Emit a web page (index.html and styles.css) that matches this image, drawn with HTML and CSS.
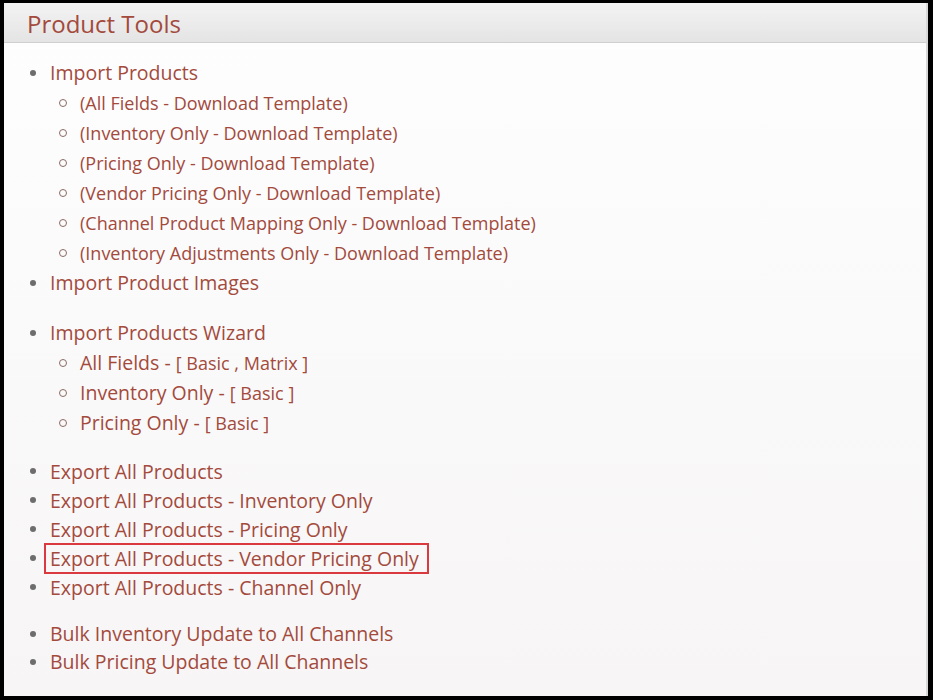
FILE: index.html
```html
<!DOCTYPE html>
<html lang="en">
<head>
<meta charset="utf-8">
<title>Product Tools</title>
<link rel="stylesheet" href="styles.css">
</head>
<body>
<div class="frame">
  <div class="panel">
    <div class="panel-header">Product Tools</div>
    <div class="panel-body">
      <ul class="list g1">
        <li class="item"><a>Import Products</a>
          <ul class="sub">
            <li class="sub-item"><a>(All Fields - Download Template)</a></li>
            <li class="sub-item"><a>(Inventory Only - Download Template)</a></li>
            <li class="sub-item"><a>(Pricing Only - Download Template)</a></li>
            <li class="sub-item"><a>(Vendor Pricing Only - Download Template)</a></li>
            <li class="sub-item"><a>(Channel Product Mapping Only - Download Template)</a></li>
            <li class="sub-item"><a>(Inventory Adjustments Only - Download Template)</a></li>
          </ul>
        </li>
        <li class="item"><a>Import Product Images</a></li>
      </ul>
      <ul class="list g2">
        <li class="item"><a>Import Products Wizard</a>
          <ul class="sub">
            <li class="sub-item big"><a>All Fields - </a><span class="br">[ <a>Basic</a> , <a>Matrix</a> ]</span></li>
            <li class="sub-item big"><a>Inventory Only - </a><span class="br">[ <a>Basic</a> ]</span></li>
            <li class="sub-item big"><a>Pricing Only - </a><span class="br">[ <a>Basic</a> ]</span></li>
          </ul>
        </li>
      </ul>
      <ul class="list g3">
        <li class="item"><a>Export All Products</a></li>
        <li class="item"><a>Export All Products - Inventory Only</a></li>
        <li class="item"><a>Export All Products - Pricing Only</a></li>
        <li class="item"><a class="highlight">Export All Products - Vendor Pricing Only</a></li>
        <li class="item"><a>Export All Products - Channel Only</a></li>
      </ul>
      <ul class="list g4">
        <li class="item"><a>Bulk Inventory Update to All Channels</a></li>
        <li class="item"><a>Bulk Pricing Update to All Channels</a></li>
      </ul>
    </div>
  </div>
</div>
</body>
</html>
```

FILE: styles.css
```css
html, body {
  margin: 0;
  padding: 0;
  background: #000;
}
body {
  font-family: "Open Sans", "Liberation Sans", sans-serif;
  color: #a34a3c;
}
.frame {
  box-sizing: border-box;
  width: 933px;
  height: 700px;
  border-style: solid;
  border-color: #000;
  border-width: 3px 5px 4px 4px;
  background: #000;
}
.panel {
  box-sizing: border-box;
  height: 100%;
  background: linear-gradient(#fefefe, #f7f5f5);
  border-right: 2px solid #d8d8d8;
  display: flex;
  flex-direction: column;
}
.panel-header {
  box-sizing: border-box;
  height: 40px;
  padding: 3px 0 0 23px;
  background: linear-gradient(#f3f3f3, #e4e4e4);
  border-bottom: 1px solid #cfcfcf;
  font-size: 24px;
  line-height: 36px;
  color: #a34a3c;
}
.panel-body {
  padding-top: 15px;
  padding-left: 46px;
}
.list {
  list-style: none;
  margin: 0;
  padding: 0;
}
.g1, .g2 { line-height: 30px; }
.g2 { margin-top: 20px; }
.g3 { margin-top: 19px; line-height: 29px; }
.g4 { margin-top: 18px; line-height: 28px; }
.item {
  position: relative;
  font-size: 19.5px;
}
.item::before {
  content: "";
  position: absolute;
  left: -20px;
  top: 12px;
  width: 6px;
  height: 6px;
  border-radius: 50%;
  background: #6d6d6d;
}
.g3 .item::before { top: 11px; }
.g4 .item::before { top: 11px; }
.sub {
  list-style: none;
  margin: 0;
  padding: 0 0 0 30px;
}
.sub-item {
  position: relative;
  font-size: 18px;
  line-height: 30px;
  height: 30px;
}
.sub-item::before {
  content: "";
  position: absolute;
  left: -21px;
  top: 11px;
  width: 6px;
  height: 6px;
  border-radius: 50%;
  border: 1px solid #8b6a62;
}
.sub-item.big { font-size: 19.5px; }
.br { font-size: 18px; line-height: 1; }
a {
  color: #a34a3c;
  text-decoration: none;
}
.highlight {
  outline: 2px solid #d9393f;
  outline-offset: 0;
  padding: 0 8px 0 4px;
  margin-left: -4px;
}
```
